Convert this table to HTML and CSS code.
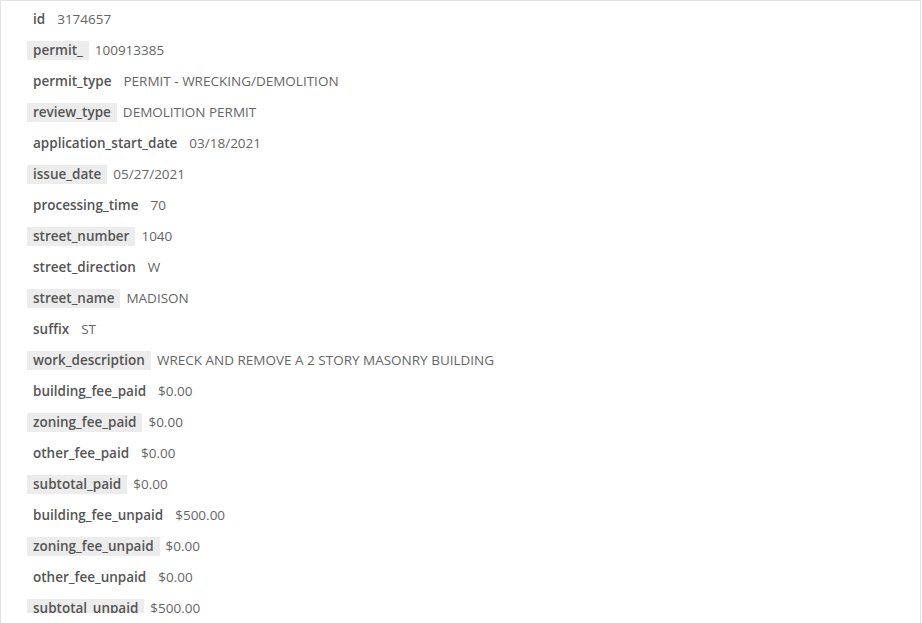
FILE: index.html
```html
<!DOCTYPE html>
<html>
  <head>
    <title>Permit Record</title>
    <link rel="stylesheet" href="styles.css">
  </head>
  <body>
    <div class="panel">
      <div class="record">
        <div class="field"><span class="key">id</span><span class="val">3174657</span></div>
        <div class="field alt"><span class="key">permit_</span><span class="val">100913385</span></div>
        <div class="field"><span class="key">permit_type</span><span class="val">PERMIT - WRECKING/DEMOLITION</span></div>
        <div class="field alt"><span class="key">review_type</span><span class="val">DEMOLITION PERMIT</span></div>
        <div class="field"><span class="key">application_start_date</span><span class="val">03/18/2021</span></div>
        <div class="field alt"><span class="key">issue_date</span><span class="val">05/27/2021</span></div>
        <div class="field"><span class="key">processing_time</span><span class="val">70</span></div>
        <div class="field alt"><span class="key">street_number</span><span class="val">1040</span></div>
        <div class="field"><span class="key">street_direction</span><span class="val">W</span></div>
        <div class="field alt"><span class="key">street_name</span><span class="val">MADISON</span></div>
        <div class="field"><span class="key">suffix</span><span class="val">ST</span></div>
        <div class="field alt"><span class="key">work_description</span><span class="val">WRECK AND REMOVE A 2 STORY MASONRY BUILDING</span></div>
        <div class="field"><span class="key">building_fee_paid</span><span class="val">$0.00</span></div>
        <div class="field alt"><span class="key">zoning_fee_paid</span><span class="val">$0.00</span></div>
        <div class="field"><span class="key">other_fee_paid</span><span class="val">$0.00</span></div>
        <div class="field alt"><span class="key">subtotal_paid</span><span class="val">$0.00</span></div>
        <div class="field"><span class="key">building_fee_unpaid</span><span class="val">$500.00</span></div>
        <div class="field alt"><span class="key">zoning_fee_unpaid</span><span class="val">$0.00</span></div>
        <div class="field"><span class="key">other_fee_unpaid</span><span class="val">$0.00</span></div>
        <div class="field alt"><span class="key">subtotal_unpaid</span><span class="val">$500.00</span></div>
      </div>
    </div>
  </body>
</html>
```

FILE: styles.css
```css
body {
  margin: 0;
  padding: 0;
  background-color: #ffffff;
  font-family: "Open Sans", sans-serif;
  font-size: 13.5px;
}
.panel {
  width: 921px;
  height: 623px;
  box-sizing: border-box;
  border: 1px solid #e3e3e3;
  border-bottom: none;
}
.record {
  height: 612px;
  overflow: hidden;
  padding: 3px 0 0 26px;
  box-sizing: border-box;
}
.field {
  display: flex;
  align-items: center;
  height: 31px;
}
.key {
  padding: 0 6px;
  line-height: 19px;
  font-weight: 600;
  color: #555555;
}
.field.alt .key {
  background-color: #ececec;
}
.val {
  margin-left: 6px;
  color: #666666;
  line-height: 19px;
}
```
